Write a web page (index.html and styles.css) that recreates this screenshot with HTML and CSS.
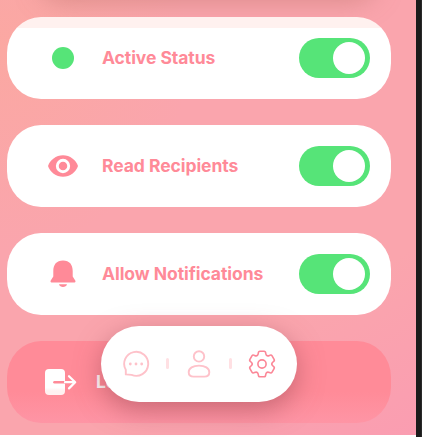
FILE: index.html
```html
<!DOCTYPE html>
<html lang="en">
<head>
<meta charset="utf-8">
<title>Settings</title>
<link rel="stylesheet" href="styles.css">
</head>
<body>
<main class="screen">
  <div class="header-shadow"></div>
  <section class="list">
    <div class="card card-first">
      <span class="icon"><span class="dot"></span></span>
      <span class="label">Active Status</span>
      <span class="toggle"><span class="knob"></span></span>
    </div>
    <div class="card">
      <span class="icon">
        <svg width="32" height="24" viewBox="0 0 32 24"><path fill="#ff8a98" d="M1 12C3 6 9 1.2 16 1.2S29 6 31 12C29 18 23 22.8 16 22.8S3 18 1 12Z"/><circle cx="16" cy="12" r="5.7" fill="#ff8a98" stroke="#fff" stroke-width="2.9"/></svg>
      </span>
      <span class="label">Read Recipients</span>
      <span class="toggle"><span class="knob"></span></span>
    </div>
    <div class="card">
      <span class="icon">
        <svg width="26" height="28" viewBox="0 0 26 28"><path fill="#ff8a98" d="M3.3 11C3.3 4.5 6.5.4 13 .4S22.7 4.5 22.7 11V16.5L25.4 20.8Q25.9 22.5 24.6 22.5H1.4Q.1 22.5.6 20.8L3.3 16.5ZM9 24.3H17C16.3 28 9.7 28 9 24.3Z"/></svg>
      </span>
      <span class="label">Allow Notifications</span>
      <span class="toggle"><span class="knob"></span></span>
    </div>
    <div class="card logout">
      <span class="icon">
        <svg width="34" height="28" viewBox="0 0 34 28"><defs><linearGradient id="door" x1="0" y1="0" x2="0" y2="1"><stop offset=".72" stop-color="#fff"/><stop offset=".84" stop-color="#fff1f1"/></linearGradient></defs><rect x="1" y="1" width="20" height="26" rx="4" fill="url(#door)"/><path d="M10.5 14.2H21" fill="none" stroke="#ff8a98" stroke-width="2.6" stroke-linecap="round"/><path d="M21 14.2H30.5M25 8.2L31.2 14.2L25 20.4" fill="none" stroke="#fff" stroke-width="2.2" stroke-linecap="round" stroke-linejoin="round"/></svg>
      </span>
      <span class="label">Logout</span>
    </div>
  </section>
</main>
<nav class="tabs">
  <svg class="tab muted" viewBox="-14 -14 28 28"><path d="M-10.2 10.4V5.8A12 12 0 1 1 -4.4 10.9Z"/><g class="dots"><circle cx="-5.7" r="1.4"/><circle r="1.4"/><circle cx="5.7" r="1.4"/></g></svg>
  <span class="divider"></span>
  <svg class="tab muted" viewBox="-14 -14 28 28"><circle cy="-7.6" r="5.2"/><path d="M-10.3 8.3C-10.3 4.2-6 1.6 0 1.6S10.3 4.2 10.3 8.3C10.3 11.6 8.4 12.6 5.4 12.6H-5.4C-8.4 12.6-10.3 11.6-10.3 8.3Z"/></svg>
  <span class="divider"></span>
  <svg class="tab" viewBox="-14 -14 28 28">
    <defs><path id="tooth" d="M-4.9-8.5C-2.6-9.2-5-12.8-2-12.8H2C5-12.8 2.6-9.2 4.9-8.5"/></defs>
    <use href="#tooth"/><use href="#tooth" transform="rotate(60)"/><use href="#tooth" transform="rotate(120)"/><use href="#tooth" transform="rotate(180)"/><use href="#tooth" transform="rotate(240)"/><use href="#tooth" transform="rotate(300)"/>
    <circle r="4.1"/>
  </svg>
</nav>
</body>
</html>
```
FILE: styles.css
```css
* { box-sizing: border-box; }
body {
  margin: 0;
  width: 422px;
  height: 437px;
  overflow: hidden;
  position: relative;
  background: linear-gradient(90deg, #1b1b1b 421px, #292929 421px);
  font-family: Inter, "Liberation Sans", sans-serif;
}
.screen {
  position: relative;
  width: 416px;
  height: 437px;
  padding: 17px 25px 0 7px;
  overflow: hidden;
  border-bottom: 2px solid #fff;
  background:
    linear-gradient(150deg, transparent 72%, rgba(250, 155, 178, .8)),
    radial-gradient(ellipse 190px 200px at 0 50px, #fba8a2, rgba(250, 167, 165, 0)),
    #faa5ad;
}
.header-shadow {
  position: absolute;
  left: 42px;
  top: -50px;
  width: 332px;
  height: 44px;
  border-radius: 22px;
  box-shadow: 0 5px 24px 3px rgba(190, 115, 105, .5);
}
.list {
  position: relative;
  display: flex;
  flex-direction: column;
  gap: 26px;
}
.card {
  display: flex;
  align-items: center;
  height: 82px;
  padding: 0 21px 0 38px;
  border-radius: 34px / 36px;
  background: #fff;
}
.card-first { background: linear-gradient(#fff1ef 11px, #fff 11px); }
.icon {
  display: flex;
  align-items: center;
  justify-content: center;
  width: 36px;
  flex: none;
}
.dot {
  width: 22px;
  height: 22px;
  border-radius: 50%;
  background: #56e478;
}
.label {
  flex: 1;
  margin-left: 21px;
  font-size: 17.5px;
  font-weight: 700;
  line-height: 24px;
  letter-spacing: -.06px;
  white-space: nowrap;
  color: #ff8a98;
}
.toggle {
  display: flex;
  align-items: center;
  justify-content: flex-end;
  width: 71px;
  height: 40px;
  padding-right: 5px;
  border-radius: 20px;
  background: #56e478;
}
.knob {
  width: 32px;
  height: 32px;
  border-radius: 50%;
  background: #fff;
}
.logout {
  padding-left: 36px;
  background: linear-gradient(#ff8b98 62%, #fe95a5);
}
.logout .label { margin-left: 17px; color: #fff; }
.tabs {
  position: absolute;
  left: 101px;
  top: 326px;
  width: 196px;
  height: 75.5px;
  padding: 0 21px;
  display: flex;
  align-items: center;
  justify-content: space-between;
  border-radius: 38px;
  background: #fff;
  box-shadow: 0 8px 26px rgba(155, 75, 85, .55);
}
.tab {
  width: 28px;
  height: 28px;
  fill: none;
  stroke: #fb8797;
  stroke-width: 1.6;
  stroke-linejoin: round;
  stroke-linecap: round;
}
.muted { stroke: #fec2ca; stroke-width: 1.9; }
.dots { fill: #fec2ca; stroke: none; }
.divider {
  width: 3px;
  height: 11px;
  border-radius: 1.5px;
  background: #ffe0e3;
}
```
